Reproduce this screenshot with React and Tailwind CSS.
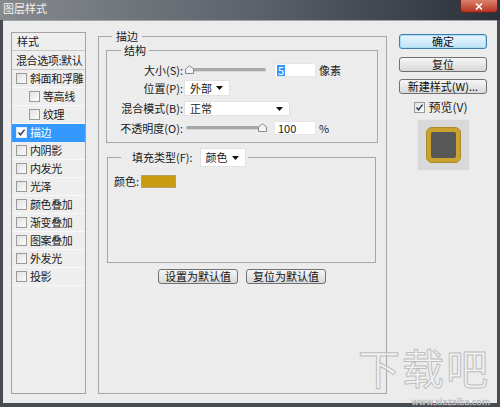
import React from "react";

const layers = [
  { label: "斜面和浮雕" },
  { label: "等高线", indent: true },
  { label: "纹理", indent: true },
  { label: "描边", checked: true, selected: true },
  { label: "内阴影" },
  { label: "内发光" },
  { label: "光泽" },
  { label: "颜色叠加" },
  { label: "渐变叠加" },
  { label: "图案叠加" },
  { label: "外发光" },
  { label: "投影" },
];

function Checkbox({ checked, light }) {
  return (
    <div
      className={
        "w-[11px] h-[11px] border flex items-center justify-center shrink-0 " +
        (light
          ? "border-[#dfe9f5] bg-white"
          : "border-[#9a9a9a] bg-gradient-to-br from-[#e2e2e2] to-[#fbfbfb]")
      }
    >
      {checked && (
        <svg width="9" height="9" viewBox="0 0 9 9">
          <path d="M1.5 4.5 L3.5 6.8 L7.6 1.6" fill="none" stroke="#2a3a5a" strokeWidth="1.4" />
        </svg>
      )}
    </div>
  );
}

function Thumb() {
  return (
    <svg width="9" height="9" viewBox="0 0 9 9" className="absolute top-[-3px]">
      <path d="M0.5 8.5 V4 L4.5 0.8 L8.5 4 V8.5 Z" fill="#f4f4f4" stroke="#8a8a8a" />
    </svg>
  );
}

function Slider({ pos }) {
  return (
    <div className="relative w-[80px] h-[4px] rounded-full bg-[#a9a9a9] border-b border-[#d6d6d6]">
      <div className={pos === "left" ? "absolute left-[-1px] top-0" : "absolute right-[8px] top-0"}>
        <Thumb />
      </div>
    </div>
  );
}

function Arrow() {
  return (
    <svg width="7" height="4" viewBox="0 0 7 4">
      <path d="M0 0 H7 L3.5 4 Z" fill="#111" />
    </svg>
  );
}

function Select({ text, width }) {
  return (
    <div className={"h-full bg-white border border-[#e2e2e2] flex items-center justify-between pl-[5px] pr-[6px] " + width}>
      <span>{text}</span>
      <Arrow />
    </div>
  );
}

function Button({ children, primary, width = "w-[88px]" }) {
  return (
    <div
      className={
        "h-[15px] rounded-[3px] border flex items-center justify-center text-[11px] leading-none text-[#111] " +
        width +
        (primary
          ? " border-[#3c7fb1] bg-gradient-to-b from-[#eaf6fd] to-[#bfe3f6] shadow-[inset_0_0_0_1px_#a9dcf5]"
          : " border-[#707070] bg-gradient-to-b from-[#f6f6f6] to-[#d8d8d8]")
      }
    >
      {children}
    </div>
  );
}

export default function App() {
  return (
    <div className="relative w-[500px] h-[407px] overflow-hidden bg-[#474c53] flex flex-col font-['Noto_Sans_CJK_SC','Liberation_Sans',sans-serif] text-[11px] text-[#1a1a1a] leading-none">
      {/* title bar */}
      <div className="h-[20px] shrink-0 bg-gradient-to-r from-[#868a8f] via-[#5d636b] to-[#2b313a] flex items-start relative">
        <span className="ml-[3px] mt-[3px] text-[11px] text-[#f2f2f2]">图层样式</span>
        <div className="absolute right-[2px] top-0 w-[38px] h-[13px] rounded-b-[4px] bg-gradient-to-b from-[#d9806c] to-[#b5311d] border border-t-0 border-[#5a2a22] flex items-center justify-center">
          <svg width="8" height="7" viewBox="0 0 8 7">
            <path d="M1 0.5 L7 6.5 M7 0.5 L1 6.5" stroke="#fff" strokeWidth="1.6" />
          </svg>
        </div>
      </div>

      {/* body */}
      <div className="flex-1 mx-[3px] mb-[4px] bg-[#ececec] border-t border-[#9ea3a8] flex items-start pl-[8px] pt-[11px]">
        {/* left list */}
        <div className="w-[75px] h-[362px] shrink-0 border border-[#a3a3a3] bg-[#eeeeee] flex flex-col">
          <div className="h-[18px] flex items-center pl-[5px] border-b border-[#c8c8c8]">样式</div>
          <div className="h-[19px] flex items-center pl-[4px] border-b border-[#c8c8c8] whitespace-nowrap tracking-[-0.4px]">
            混合选项:默认
          </div>
          {layers.map((l) => (
            <div
              key={l.label}
              className={
                "h-[18px] flex items-center gap-[3px] border-b whitespace-nowrap tracking-[-0.4px] " +
                (l.indent ? "pl-[17px] " : "pl-[4px] ") +
                (l.selected ? "bg-[#3399ff] text-white border-[#3399ff]" : "border-[#f8f8f8]")
              }
            >
              <Checkbox checked={l.checked} light={l.selected} />
              <span>{l.label}</span>
            </div>
          ))}
        </div>

        {/* main group */}
        <fieldset className="ml-[12px] mt-[-3px] w-[289px] h-[365px] shrink-0 border border-[#a6a6a6] pl-[7px] pr-[8px]">
          <legend className="ml-[6px] px-[4px] h-[14px] leading-[14px]">描边</legend>

          <fieldset className="border border-[#a6a6a6] flex flex-col pb-[7px]">
            <legend className="ml-[14px] px-[3px] h-[14px] leading-[14px]">结构</legend>

            <div className="mt-[6px] h-[14px] flex items-center">
              <span className="w-[76px] text-right">大小(S):</span>
              <div className="ml-[3px]"><Slider pos="left" /></div>
              <div className="ml-[8px] w-[42px] h-[14px] bg-white border border-[#e6e6e6] flex items-center pl-[2px]">
                <span className="bg-[#3399ff] text-white px-[1px]">5</span>
              </div>
              <span className="ml-[3px]">像素</span>
            </div>

            <div className="mt-[3px] h-[16px] flex items-center">
              <span className="w-[76px] text-right">位置(P):</span>
              <div className="ml-[1px] h-full">
                <Select text="外部" width="w-[46px]" />
              </div>
            </div>

            <div className="mt-[5px] h-[15px] flex items-center">
              <span className="w-[76px] text-right whitespace-nowrap">混合模式(B):</span>
              <div className="ml-[1px] h-full">
                <Select text="正常" width="w-[106px]" />
              </div>
            </div>

            <div className="mt-[5px] h-[14px] flex items-center">
              <span className="w-[76px] text-right whitespace-nowrap">不透明度(O):</span>
              <div className="ml-[3px]"><Slider pos="right" /></div>
              <div className="ml-[8px] w-[42px] h-[14px] bg-white border border-[#e6e6e6] flex items-center pl-[3px]">
                100
              </div>
              <span className="ml-[3px]">%</span>
            </div>
          </fieldset>

          <fieldset className="mt-[5px] ml-[1px] mr-[2px] h-[115px] border border-[#a6a6a6] pl-[6px]">
            <legend className="ml-[7px] pl-[11px] pr-[2px] h-[19px]">
              <div className="flex items-center h-full">
                <span>填充类型(F):</span>
                <div className="ml-[7px] h-full">
                  <Select text="颜色" width="w-[46px]" />
                </div>
              </div>
            </legend>
            <div className="mt-[8px] flex items-center h-[13px]">
              <span>颜色:</span>
              <div className="ml-[2px] w-[35px] h-[13px] bg-[#c99b12] border border-[#b8a066]" />
            </div>
          </fieldset>

          <div className="mt-[6px] flex justify-center gap-[8px]">
            <Button width="w-[80px]">设置为默认值</Button>
            <Button width="w-[80px]">复位为默认值</Button>
          </div>
        </fieldset>

        {/* right column */}
        <div className="ml-[12px] mt-[2px] w-[88px] flex flex-col items-center">
          <Button primary>确定</Button>
          <div className="mt-[8px]"><Button>复位</Button></div>
          <div className="mt-[7px]"><Button>新建样式(W)...</Button></div>
          <div className="mt-[7px] flex items-center gap-[3px] mr-[4px]">
            <Checkbox checked />
            <span className="text-[12px]">预览(V)</span>
          </div>
          <div className="mt-[6px] w-[53px] h-[52px] bg-[#d9d9d9] border border-[#e8e8e8] flex items-center justify-center">
            <div className="w-[35px] h-[36px] rounded-[6px] bg-[#c9a32e] border border-[#a88a2a] flex items-center justify-center">
              <div className="w-[25px] h-[26px] rounded-[2px] bg-[#575757]" />
            </div>
          </div>
        </div>
      </div>

      {/* watermark */}
      <div className="absolute right-[10px] bottom-[1px] flex flex-col items-end gap-[9px] pointer-events-none">
        <span className="text-[42px] leading-[42px] tracking-[2px] text-white/40 [-webkit-text-stroke:1px_#bdbdbd]">下载吧</span>
        <span className="text-[9px] leading-[9px] text-white/60 [-webkit-text-stroke:0.5px_#b4b4b4]">www.xiazaiba.com</span>
      </div>
    </div>
  );
}
